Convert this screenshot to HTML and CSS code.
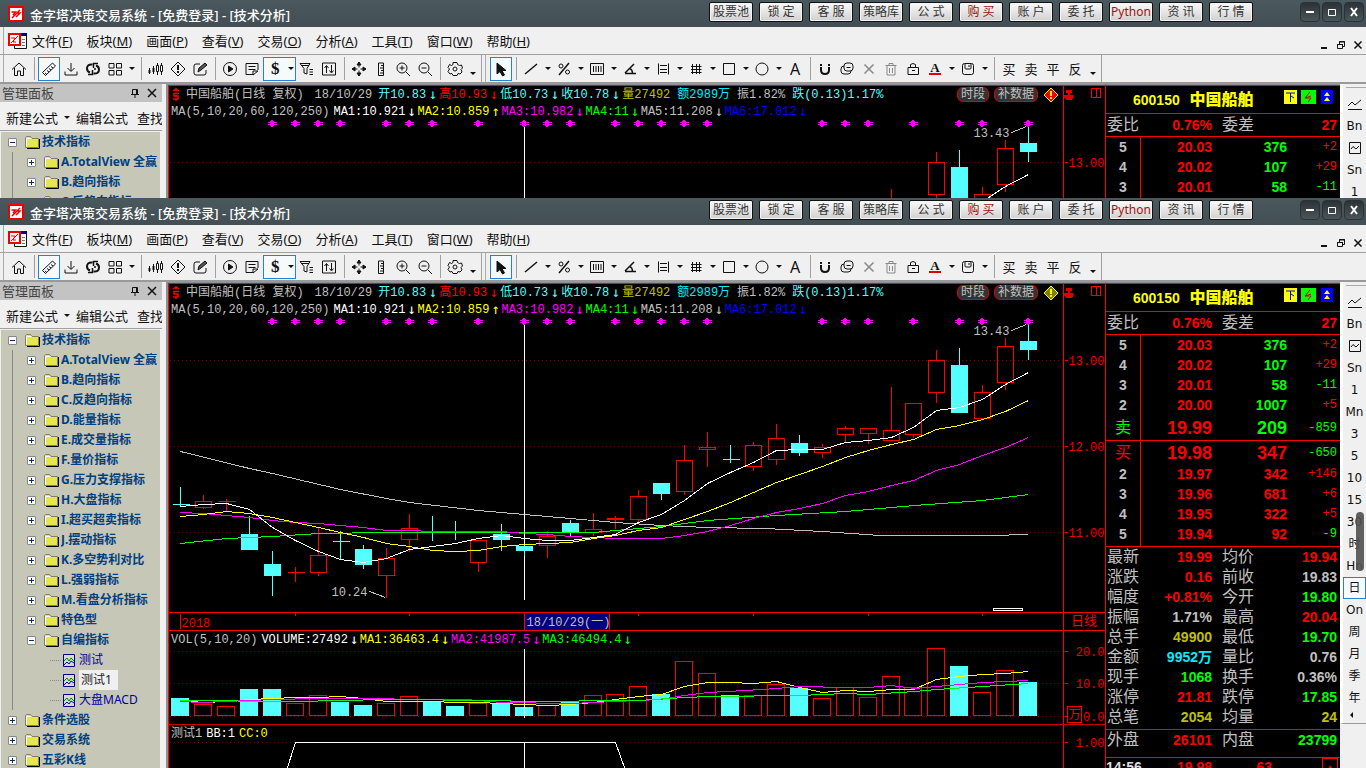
FILE: index.html
```html
<!DOCTYPE html>
<html lang="zh-CN">
<head>
	<meta charset="utf-8">
	<title>金字塔决策交易系统</title>
	<link rel="stylesheet" href="styles.css">
</head>
<body>
	<svg class="symbols" aria-hidden="true">
		<symbol id="i-home" viewBox="0 0 16 16"><path d="M1 8.500 8 2l7 6.500M3.500 7v7.500h3V10h3v4.500h3V7"/></symbol>
		<symbol id="i-ruler" viewBox="0 0 16 16"><path d="M1.500 11.500 11.500 2l3 3L4.500 14.500zM4 12l1.500 1M6 9.500l2 1.500M8 7.500l2 1.500M10 5.500l2 1.500"/></symbol>
		<symbol id="i-down" viewBox="0 0 16 16"><path d="M8 2v8M4.500 7 8 10.500 11.500 7M2 10.500V14h12v-3.500"/></symbol>
		<symbol id="i-sync" viewBox="0 0 16 16"><path d="M7.500 3.500Q2 3 2 7.500q0 3 3 4M8.500 12.500q5.500.500 5.500-4 0-3-3-4" stroke-width="2"/><path d="M3 13.500h4.500V9M13 2.500H8.500V7M9 8h2" stroke-width="1.500"/></symbol>
		<symbol id="i-grid" viewBox="0 0 16 16"><path d="M2 2.500h5v4.500H2zM9.500 2.500h5v4.500h-5zM2 9.500h5V14H2zM9.500 9.500h5V14h-5z"/></symbol>
		<symbol id="i-candle" viewBox="0 0 16 16"><path d="M1.500 7v6M5.500 5v8M9.500 2v12M13.500 2v12"/><path d="M1.500 9v3M5.500 7v4" stroke-width="2"/><path d="M8.500 4.500h2v6h-2zM12.500 4.500h2v6h-2z" fill="#fff"/></symbol>
		<symbol id="i-warn" viewBox="0 0 16 16"><path d="M8 1l7 7-7 7-7-7z"/><path d="M8 4v5M8 10v2" stroke-width="2"/></symbol>
		<symbol id="i-edit" viewBox="0 0 16 16"><path d="M8 3H4Q2 3 2 5v7q0 2 2 2h8q2 0 2-2V9"/><path d="M6 11l1-4 6-5 2 2-6 5z" fill="#555"/></symbol>
		<symbol id="i-play" viewBox="0 0 16 16"><circle cx="8" cy="8" r="6.500"/><path d="M6.500 5v6L11 8z" fill="#111"/></symbol>
		<symbol id="i-note" viewBox="0 0 16 16"><path d="M14 9V2.500H2v11h7M4.500 5.500h7M4.500 8.500h7M9 14v-4h5z"/></symbol>
		<symbol id="i-filter" viewBox="0 0 16 16"><path d="M1 2.500h10L8 7.500V13l-3-1V7.500zM2 4.500h8M10.500 8.500H14M10.500 11H14M10.500 13.500H14"/></symbol>
		<symbol id="i-updown" viewBox="0 0 16 16"><path d="M1.500 2h13v12h-13zM5.500 12V5M3.500 7l2-2.500 2 2.500M10.500 4v7M8.500 9.500l2 2.500 2-2.500"/></symbol>
		<symbol id="i-move" viewBox="0 0 16 16"><path d="M8 1v14M1 8h14"/><path d="M8 1l2 3H6zM8 15l2-3H6zM1 8l3-2v4zM15 8l-3-2v4z" fill="#111"/><path d="M6.500 6.500h3v3h-3z" fill="#f0f0f0" stroke="none"/></symbol>
		<symbol id="i-scale" viewBox="0 0 16 16"><path d="M5.500 2h5v12.500h-5zM8 4.500h2M7 7h3M8 9.500h2M7 12h3"/></symbol>
		<symbol id="i-zin" viewBox="0 0 16 16"><circle cx="7" cy="7" r="5"/><path d="M4.500 7h5M7 4.500v5M11 11l4 4"/></symbol>
		<symbol id="i-zout" viewBox="0 0 16 16"><circle cx="7" cy="7" r="5"/><path d="M4.500 7h5M11 11l4 4"/></symbol>
		<symbol id="i-gear" viewBox="0 0 16 16"><path d="M6 1.500h4l.5 2 2 1 2-.5 1 3-1.500 1.500L15 11l-2 2-2-.5-1 2H6l-1-2-2 .5-2-2.500L2.500 8 1 6.500l1.500-3 2 1 1.500-1z"/><circle cx="8" cy="8" r="2"/></symbol>
		<symbol id="i-cursor" viewBox="0 0 16 16"><path d="M4 2v11l3-2.500L9.500 15l2-1-2.500-4.500h4z" fill="#111"/></symbol>
		<symbol id="i-line" viewBox="0 0 16 16"><path d="M2 13 14 3" stroke-width="1.500"/></symbol>
		<symbol id="i-percent" viewBox="0 0 16 16"><path d="M3 14 13 2" stroke-width="1.500"/><circle cx="5" cy="5" r="2"/><circle cx="11.500" cy="11" r="2"/></symbol>
		<symbol id="i-bars" viewBox="0 0 16 16"><path d="M1.500 2.500h13v11h-13zM4.500 5v6M7 5v6M9.500 5v6M12 5v6"/></symbol>
		<symbol id="i-angle" viewBox="0 0 16 16"><path d="M3 12.500h11M3 12 12 3M7.500 7.500q3 1 3 5" stroke-width="1.500"/></symbol>
		<symbol id="i-levels" viewBox="0 0 16 16"><path d="M3.500 2.500v11M13.500 2.500v11M5 4.500h7M5 8.500h7M5 11.500h7"/></symbol>
		<symbol id="i-hash" viewBox="0 0 16 16"><path d="M4.500 3v10M8.500 3v10M11.500 3v10M3 5.500h10.500M3 8.500h10.500M3 11.500h10.500"/></symbol>
		<symbol id="i-rect" viewBox="0 0 16 16"><path d="M2.500 2.500h11v11h-11z"/></symbol>
		<symbol id="i-circle" viewBox="0 0 16 16"><circle cx="8" cy="8" r="6"/></symbol>
		<symbol id="i-magnet" viewBox="0 0 16 16"><path d="M4 6v3q0 4 4 4t4-4V6M4 3v2M12 3v2" stroke-width="2"/></symbol>
		<symbol id="i-copy" viewBox="0 0 16 16"><rect x="5" y="2" width="9" height="8" rx="3"/><path d="M5 5Q2 5 2 8v2q0 3 3 3h4q3 0 3-3M7.500 6.500h4"/></symbol>
		<symbol id="i-x" viewBox="0 0 16 16"><path d="M3.500 3.500l9 9M12.500 3.500l-9 9" stroke="#888" stroke-width="1.500"/></symbol>
		<symbol id="i-trash" viewBox="0 0 16 16"><path d="M2.500 4.500h11M6 4V2.500h4V4M4 5v9h8V5M6.500 7v5M9.500 7v5" stroke="#888"/></symbol>
		<symbol id="i-lock" viewBox="0 0 16 16"><path d="M3 6.500h10.500v7H3zM5.500 6V3.500q2.500-2 5 0V6M7 9.500h3"/></symbol>
		<symbol id="i-save" viewBox="0 0 16 16"><rect x="2.500" y="2.500" width="11" height="11" rx="2"/><path d="M5 3v4q0 1 1 1h4q1 0 1-1V3M9 4v2"/></symbol>
		<symbol id="i-trend" viewBox="0 0 16 16"><path d="M1 10 5 6l3 3 6-5M1 13.500h14"/></symbol>
		<symbol id="i-chart" viewBox="0 0 16 16"><path d="M2.500 2.500h11v11h-11zM4 9l2-2.500 3 2.500 3-3"/></symbol>
		<symbol id="i-logo" viewBox="0 0 16 16"><path d="M0 0h16v16H0z" fill="#e00" stroke="none"/><path d="M2 2h12v12H2z" fill="#fff" stroke="none"/><path d="M4 12l8-8M3.500 6h4L5 9M8 11l4-4H9" stroke="#e00" stroke-width="1.500"/></symbol>
		<symbol id="i-doc" viewBox="0 0 20 18"><path d="M6.500 1.500h12v15h-12z" fill="#fff"/><path d="M6 1h13v3H6z" fill="#000080" stroke="none"/><path d="M14 7.500h3M14 10.500h3M14 13.500h3" stroke="#777"/><path d="M1 2h11v11H1z" fill="#fff" stroke="#e00" stroke-width="2"/><path d="M3 11l7-7M3 6h4l-2 4h3" stroke="#e00"/></symbol>
		<symbol id="i-folder" viewBox="0 0 15 14"><path d="M2 13.500h12.500V4" stroke="#000"/><path d="M.5 12.500v-10l1-1h4l1.500 2h6.500v9z" fill="#e6e650" stroke="#808060"/><path d="M1.500 3.500h5M1.500 11.500V4" stroke="#fff"/></symbol>
		<symbol id="i-formula" viewBox="0 0 12 13"><path d="M.5.5h11v12H.5z" fill="#d8d8cc" stroke="#000080"/><path d="M1 7l3-3 2 3 2-3 3 3" stroke="#080"/><path d="M1 11l3-3 2 2 2-3 3 2" stroke="#00f"/></symbol>
		<symbol id="i-pin" viewBox="0 0 10 10"><path d="M2.500 6V1.500h5V6M1 6.500h8M5 7v3M6.500 2v4"/></symbol>
		<symbol id="i-anchor" viewBox="0 0 10 12"><path d="M2 0h6v3H6v2h4v3L8 10H2L0 8V5h4V3H2z" fill="#d00" stroke="none"/></symbol>
	</svg>

	<section class="window back">
		<header class="titlebar">
			<svg class="logo"><use href="#i-logo"/></svg>
			<h1>金字塔决策交易系统 - [免费登录] - [技术分析]</h1>
			<nav class="quick">
				<button>股票池</button>
				<button>锁 定</button>
				<button>客 服</button>
				<button>策略库</button>
				<button>公 式</button>
				<button class="hot">购 买</button>
				<button>账 户</button>
				<button>委 托</button>
				<button class="hot">Python</button>
				<button>资 讯</button>
				<button>行 情</button>
			</nav>
			<div class="winbtns">
				<button aria-label="最小化"><svg viewBox="0 0 12 12"><path d="M2 6h8" stroke-width="2"/></svg></button>
				<button aria-label="最大化"><svg viewBox="0 0 12 12"><path d="M2.500 3.500h7v6h-7z"/></svg></button>
				<button aria-label="关闭"><svg viewBox="0 0 12 12"><path d="M3 2l6 8M9 2l-6 8" stroke-width="2"/></svg></button>
			</div>
		</header>

		<div class="menubar">
			<svg class="doc"><use href="#i-doc"/></svg>
			<button>文件(<u>F</u>)</button>
			<button>板块(<u>M</u>)</button>
			<button>画面(<u>P</u>)</button>
			<button>查看(<u>V</u>)</button>
			<button>交易(<u>O</u>)</button>
			<button>分析(<u>A</u>)</button>
			<button>工具(<u>T</u>)</button>
			<button>窗口(<u>W</u>)</button>
			<button>帮助(<u>H</u>)</button>
			<div class="mdi">
				<button aria-label="最小化"><svg viewBox="0 0 10 10"><path d="M2 8h6" stroke-width="2"/></svg></button>
				<button aria-label="还原"><svg viewBox="0 0 10 10"><path d="M1.500 4.500h5v4h-5zM3.500 4V1.500h5v5H7M1 4.500h6M3 2h6"/></svg></button>
				<button aria-label="关闭"><svg viewBox="0 0 10 10"><path d="M1.500 1.500l7 7M8.500 1.500l-7 7" stroke-width="1.500"/></svg></button>
			</div>
		</div>

		<div class="toolbars">
			<div class="toolbar">
				<button aria-label="主页"><svg><use href="#i-home"/></svg></button>
				<i class="sep"></i>
				<button class="on" aria-label="画线"><svg><use href="#i-ruler"/></svg></button>
				<button aria-label="下载"><svg><use href="#i-down"/></svg></button>
				<button aria-label="刷新"><svg><use href="#i-sync"/></svg></button>
				<button class="drop" aria-label="版面"><svg><use href="#i-grid"/></svg></button>
				<i class="sep"></i>
				<button aria-label="K线"><svg><use href="#i-candle"/></svg></button>
				<button aria-label="预警"><svg><use href="#i-warn"/></svg></button>
				<button aria-label="编辑"><svg><use href="#i-edit"/></svg></button>
				<i class="sep"></i>
				<button aria-label="播放"><svg><use href="#i-play"/></svg></button>
				<button aria-label="记事"><svg><use href="#i-note"/></svg></button>
				<button class="drop on money">$</button>
				<button aria-label="筛选"><svg><use href="#i-filter"/></svg></button>
				<button aria-label="排序"><svg><use href="#i-updown"/></svg></button>
				<i class="sep"></i>
				<button aria-label="移动"><svg><use href="#i-move"/></svg></button>
				<button aria-label="标尺"><svg><use href="#i-scale"/></svg></button>
				<button aria-label="放大"><svg><use href="#i-zin"/></svg></button>
				<button aria-label="缩小"><svg><use href="#i-zout"/></svg></button>
				<i class="sep"></i>
				<button aria-label="设置"><svg><use href="#i-gear"/></svg></button>
				<button class="more" aria-label="更多"></button>
			</div>
			<div class="toolbar">
				<button class="on" aria-label="选择"><svg><use href="#i-cursor"/></svg></button>
				<i class="sep"></i>
				<button class="drop" aria-label="直线"><svg><use href="#i-line"/></svg></button>
				<button class="drop" aria-label="百分比"><svg><use href="#i-percent"/></svg></button>
				<button class="drop" aria-label="周期线"><svg><use href="#i-bars"/></svg></button>
				<button class="drop" aria-label="角度线"><svg><use href="#i-angle"/></svg></button>
				<button class="drop" aria-label="水平线"><svg><use href="#i-levels"/></svg></button>
				<button class="drop" aria-label="网格"><svg><use href="#i-hash"/></svg></button>
				<button class="drop" aria-label="矩形"><svg><use href="#i-rect"/></svg></button>
				<button class="drop" aria-label="圆"><svg><use href="#i-circle"/></svg></button>
				<button class="letter">A</button>
				<i class="sep"></i>
				<button aria-label="吸附"><svg><use href="#i-magnet"/></svg></button>
				<button aria-label="复制"><svg><use href="#i-copy"/></svg></button>
				<button aria-label="删除"><svg><use href="#i-x"/></svg></button>
				<button aria-label="清空"><svg><use href="#i-trash"/></svg></button>
				<button aria-label="锁定"><svg><use href="#i-lock"/></svg></button>
				<button class="drop color"><b>A</b></button>
				<button class="drop" aria-label="保存"><svg><use href="#i-save"/></svg></button>
				<i class="sep"></i>
				<button>买</button>
				<button>卖</button>
				<button>平</button>
				<button>反</button>
				<button class="more" aria-label="更多"></button>
			</div>
		</div>

		<div class="workspace">
			<aside class="panel">
				<div class="panel-head">
					<h2>管理面板</h2>
					<button aria-label="固定"><svg viewBox="0 0 10 10"><use href="#i-pin"/></svg></button>
					<button aria-label="关闭"><svg viewBox="0 0 10 10"><path d="M1 1l8 8M9 1l-8 8" stroke-width="1.500"/></svg></button>
				</div>
				<div class="panel-tools">
					<button class="new">新建公式</button>
					<button class="edit">编辑公式</button>
					<button>查找</button>
				</div>
				<ul class="tree">
					<li><button class="box open"></button><svg><use href="#i-folder"/></svg><b>技术指标</b>
						<ul>
							<li><button class="box"></button><svg><use href="#i-folder"/></svg><b>A.TotalView 全赢</b></li>
							<li><button class="box"></button><svg><use href="#i-folder"/></svg><b>B.趋向指标</b></li>
							<li><button class="box"></button><svg><use href="#i-folder"/></svg><b>C.反趋向指标</b></li>
							<li><button class="box"></button><svg><use href="#i-folder"/></svg><b>D.能量指标</b></li>
							<li><button class="box"></button><svg><use href="#i-folder"/></svg><b>E.成交量指标</b></li>
							<li><button class="box"></button><svg><use href="#i-folder"/></svg><b>F.量价指标</b></li>
							<li><button class="box"></button><svg><use href="#i-folder"/></svg><b>G.压力支撑指标</b></li>
							<li><button class="box"></button><svg><use href="#i-folder"/></svg><b>H.大盘指标</b></li>
							<li><button class="box"></button><svg><use href="#i-folder"/></svg><b>I.超买超卖指标</b></li>
							<li><button class="box"></button><svg><use href="#i-folder"/></svg><b>J.摆动指标</b></li>
							<li><button class="box"></button><svg><use href="#i-folder"/></svg><b>K.多空势利对比</b></li>
							<li><button class="box"></button><svg><use href="#i-folder"/></svg><b>L.强弱指标</b></li>
							<li><button class="box"></button><svg><use href="#i-folder"/></svg><b>M.看盘分析指标</b></li>
							<li><button class="box"></button><svg><use href="#i-folder"/></svg><b>特色型</b></li>
							<li><button class="box open"></button><svg><use href="#i-folder"/></svg><b>自编指标</b>
								<ul class="leaves">
									<li><svg><use href="#i-formula"/></svg><a href="#">测试</a></li>
									<li><svg><use href="#i-formula"/></svg><a class="sel" href="#">测试1</a></li>
									<li><svg><use href="#i-formula"/></svg><a href="#">大盘MACD</a></li>
								</ul>
							</li>
						</ul>
					</li>
					<li><button class="box"></button><svg><use href="#i-folder"/></svg><b>条件选股</b></li>
					<li><button class="box"></button><svg><use href="#i-folder"/></svg><b>交易系统</b></li>
					<li><button class="box"></button><svg><use href="#i-folder"/></svg><b>五彩K线</b></li>
				</ul>
			</aside>

			<main class="chart">
				<div class="pane">
					<div class="plot">
						<div class="line info">
							<svg class="money-ico" viewBox="0 0 8 14"><path d="M4 0v3M1 3l3-2 3 2M7 5.500H2V8h4v3H1M4 11v2"/></svg>
							<span class="name">中国船舶(日线 复权)</span>
							<span class="day">18/10/29</span>
							<span class="cyan">开10.83<i>↓</i></span>
							<span class="red">高10.93<i>↓</i></span>
							<span class="cyan">低10.73<i>↓</i></span>
							<span class="cyan">收10.78<i>↓</i></span>
							<span class="olive item">量27492</span>
							<span class="sky item">额2989万</span>
							<span class="item">振1.82%</span>
							<span class="cyan">跌(0.13)1.17%</span>
							<div class="badges">
								<button>时段</button>
								<button>补数据</button>
								<svg class="alert" viewBox="0 0 16 16"><path d="M8 1l7 7-7 7-7-7z"/><path class="mark" d="M8 4v5M8 10v2"/></svg>
							</div>
						</div>
						<div class="line">
							<span class="item">MA(5,10,20,60,120,250)</span>
							<span class="white">MA1:10.921<i>↓</i></span>
							<span class="yellow">MA2:10.859<i>↑</i></span>
							<span class="pink">MA3:10.982<i>↓</i></span>
							<span class="green">MA4:11<i>↓</i></span>
							<span>MA5:11.208<i>↓</i></span>
							<span class="blue">MA6:17.012<i>↓</i></span>
						</div>
						<svg class="canvas price"></svg>
					</div>
					<svg class="axis price-axis"></svg>
				</div>
				<div class="pane time">
					<svg class="canvas dates"></svg>
					<div class="period">日线</div>
				</div>
				<div class="pane dim">
					<div class="plot">
						<div class="line">
							<span class="item">VOL(5,10,20)</span>
							<span class="white">VOLUME:27492<i>↓</i></span>
							<span class="yellow">MA1:36463.4<i>↓</i></span>
							<span class="pink">MA2:41987.5<i>↓</i></span>
							<span class="green">MA3:46494.4<i>↓</i></span>
						</div>
						<svg class="canvas volume"></svg>
					</div>
					<svg class="axis volume-axis"></svg>
				</div>
				<div class="pane last">
					<div class="plot">
						<div class="line">
							<span class="item">测试1</span>
							<span class="white item">BB:1</span>
							<span class="yellow">CC:0</span>
						</div>
						<svg class="canvas test"></svg>
					</div>
					<svg class="axis test-axis"></svg>
				</div>
			</main>

			<section class="quote">
				<div class="stock">
					<h2>600150 <strong>中国船舶</strong></h2>
					<svg viewBox="0 0 50 14">
						<path d="M0 0h13v14H0z" fill="#ff0"/><path d="M2 3h9M6.500 3v9M7 6l3 2" stroke="#00f"/>
						<path d="M17 0h15v14H17z" fill="#0f0"/><path d="M26 2l-5 6h6l-3 4M21 8l6-2" stroke="#c00"/>
						<path d="M37 0h12v14H37z" fill="#00f"/><path d="M40 6l3-4 3 4zM40 11l3-4 3 4z" fill="#ff0"/>
					</svg>
				</div>
				<table class="detail ratio">
					<tr><th>委比</th><td class="red">0.76%</td><th>委差</th><td class="red">27</td></tr>
				</table>
				<table class="depth">
					<tr><th>5</th><td class="red">20.03</td><td class="green">376</td><td class="red">+2</td></tr>
					<tr><th>4</th><td class="red">20.02</td><td class="green">107</td><td class="red">+29</td></tr>
					<tr><th>3</th><td class="red">20.01</td><td class="green">58</td><td class="green">-11</td></tr>
					<tr><th>2</th><td class="red">20.00</td><td class="green">1007</td><td class="red">+5</td></tr>
					<tr class="best"><th class="green">卖</th><td class="red">19.99</td><td class="green">209</td><td class="green">-859</td></tr>
				</table>
				<table class="depth bids">
					<tr class="best"><th class="red">买</th><td class="red">19.98</td><td class="red">347</td><td class="green">-650</td></tr>
					<tr><th>2</th><td class="red">19.97</td><td class="red">342</td><td class="red">+146</td></tr>
					<tr><th>3</th><td class="red">19.96</td><td class="red">681</td><td class="red">+6</td></tr>
					<tr><th>4</th><td class="red">19.95</td><td class="red">322</td><td class="red">+5</td></tr>
					<tr><th>5</th><td class="red">19.94</td><td class="red">92</td><td class="green">-9</td></tr>
				</table>
				<table class="detail facts">
					<tr><th>最新</th><td class="red">19.99</td><th>均价</th><td class="red">19.94</td></tr>
					<tr><th>涨跌</th><td class="red">0.16</td><th>前收</th><td>19.83</td></tr>
					<tr><th>幅度</th><td class="red">+0.81%</td><th>今开</th><td class="green">19.80</td></tr>
					<tr><th>振幅</th><td>1.71%</td><th>最高</th><td class="red">20.04</td></tr>
					<tr><th>总手</th><td class="olive">49900</td><th>最低</th><td class="green">19.70</td></tr>
					<tr><th>金额</th><td class="sky">9952万</td><th>量比</th><td>0.76</td></tr>
					<tr><th>现手</th><td class="green">1068</td><th>换手</th><td>0.36%</td></tr>
					<tr><th>涨停</th><td class="red">21.81</td><th>跌停</th><td class="green">17.85</td></tr>
					<tr><th>总笔</th><td class="olive">2054</td><th>均量</th><td class="olive">24</td></tr>
				</table>
				<table class="detail sides">
					<tr><th>外盘</th><td class="red">26101</td><th>内盘</th><td class="green">23799</td></tr>
				</table>
				<div class="tick">
					<span class="t">14:56</span><span class="p red">19.98</span><span class="v red">63</span>
					<button aria-label="向上">▲</button>
				</div>
			</section>

			<nav class="periods">
				<button aria-label="分时"><svg><use href="#i-trend"/></svg></button>
				<button>Bn</button>
				<button aria-label="走势"><svg><use href="#i-chart"/></svg></button>
				<button>Sn</button>
				<button>1</button>
				<button>Mn</button>
				<button>3</button>
				<button>5</button>
				<button>10</button>
				<button>15</button>
				<button>30</button>
				<button>时</button>
				<button>Hn</button>
				<button class="on">日</button>
				<button>On</button>
				<button>周</button>
				<button>月</button>
				<button>季</button>
				<button>年</button>
				<button class="fold" aria-label="收起"></button>
			</nav>
		</div>
	</section>
	<div class="thumb"></div>
	<script src="chart.js"></script>
</body>
</html>
```
FILE: styles.css
```css
*{
	box-sizing: border-box;
}
body{
	margin: 0;
	height: 100vh;
	overflow: hidden;
	display: flex;
	flex-direction: column;
	position: relative;
	background: #f0f0f0;
	font: 13px/18px "Noto Sans", "Noto Sans CJK SC", sans-serif;
	color: #111;
}
button{
	margin: 0;
	padding: 0;
	border: 0;
	background: none;
	font: inherit;
	color: inherit;
	white-space: nowrap;
}
h1, h2, ul{
	margin: 0;
	padding: 0;
}
h1, h2{
	font-size: 13px;
	font-weight: normal;
}
svg{
	display: block;
	fill: none;
	stroke: #111;
	flex: none;
}
.symbols{
	position: absolute;
	width: 0;
	height: 0;
}

.red{ color: #f00; }
.green{ color: #0f0; }
.cyan{ color: #54ffff; }
.sky{ color: #0ef; }
.olive{ color: #c0c000; }
.yellow{ color: #ff0; }
.pink{ color: #f0f; }
.blue{ color: #00f; }
.white{ color: #fff; }

/* window */
.window{
	flex: 1 0 0;
	min-height: 0;
	overflow: hidden;
	display: flex;
	flex-direction: column;
}
.window.back{
	flex: 0 0 198px;
}
.titlebar{
	flex: none;
	height: 27px;
	padding: 0 2px 0 8px;
	display: flex;
	align-items: center;
	background: linear-gradient(#4a595e, #424e53);
	color: #fff;
}
.logo{
	width: 16px;
	height: 16px;
	margin-right: 6px;
}
.titlebar h1{
	flex: 1;
	font-weight: 500;
	padding-top: 2px;
	white-space: nowrap;
}
.quick{
	display: flex;
	gap: 6px;
	margin: 0 47px 4px 0;
}
.quick button{
	width: 44px;
	height: 20px;
	border: 1px solid #111;
	border-radius: 2px;
	background: linear-gradient(#fafafa, #d0d0d0);
	box-shadow: inset 0 0 0 1px #f4f4f4;
	color: #333;
	font-size: 12px;
	line-height: 18px;
}
.quick .hot{
	color: #a01010;
}
.winbtns{
	display: flex;
	gap: 2px;
	margin-bottom: 4px;
}
.winbtns button{
	width: 20px;
	height: 20px;
	border: 1px solid #2a3235;
	border-radius: 4px;
	background: linear-gradient(#2c3336, #4a5559);
}
.winbtns svg{
	width: 12px;
	height: 12px;
	margin: auto;
	stroke: #fff;
}

.menubar{
	flex: none;
	height: 28px;
	padding: 0 3px 0 8px;
	display: flex;
	align-items: center;
	gap: 14px;
	border-bottom: 1px solid #a0a0a0;
	box-shadow: inset 3px 0 0 #f0f0f0, inset 4px 0 0 #aaa;
}
.doc{
	width: 20px;
	height: 18px;
	margin-right: -10px;
}
.mdi{
	margin-left: auto;
	padding-top: 9px;
	display: flex;
	gap: 7px;
}
.mdi svg{
	width: 10px;
	height: 10px;
}

.toolbars{
	flex: none;
	display: flex;
	height: 29px;
	border-bottom: 2px solid #999;
}
.toolbar{
	display: flex;
	align-items: center;
	padding: 0 1px 0 8px;
	border-right: 1px solid #a0a0a0;
	box-shadow: inset 3px 0 0 #f0f0f0, inset 4px 0 0 #aaa;
}
.toolbar button{
	width: 22px;
	height: 24px;
	display: flex;
	align-items: center;
	justify-content: center;
}
.toolbar svg, .periods svg{
	width: 16px;
	height: 16px;
}
.toolbar .on, .periods .on{
	border: 1px solid #2a80d0;
	background: #f7fafd;
}
.toolbar .drop{
	width: 33px;
	justify-content: flex-start;
	padding-left: 3px;
}
.toolbar .drop::after, .new::after{
	content: "";
	border: 3px solid transparent;
	border-top-color: #111;
	border-bottom: 0;
	margin-left: 6px;
}
.toolbar .money{
	font: bold 17px/20px "Liberation Serif", serif;
	padding-left: 7px;
}
.toolbar .money::after{
	margin-left: 8px;
}
.toolbar .letter{
	font-size: 16px;
}
.toolbar .color b{
	width: 12px;
	margin: 0 2px;
	font: bold 13px/11px "Liberation Serif", serif;
	border-bottom: 2px solid #d00;
	text-align: center;
}
.toolbar .more{
	width: 14px;
	padding-top: 10px;
}
.more::after{
	content: "";
	border: 3px solid transparent;
	border-top-color: #111;
	border-bottom: 0;
}
.sep{
	width: 8px;
	height: 23px;
	background: linear-gradient(#a0a0a0, #a0a0a0) 4px 0 / 1px 100% no-repeat;
}

.workspace{
	flex: 1;
	min-height: 0;
	display: flex;
}

/* left panel */
.panel{
	flex: none;
	width: 162px;
	display: flex;
	flex-direction: column;
	overflow: hidden;
}
.panel-head{
	flex: none;
	height: 18px;
	padding: 0 5px 0 2px;
	display: flex;
	align-items: center;
	gap: 7px;
	background: #c3c3c3;
	color: #444;
}
.panel-head h2{
	flex: 1;
}
.panel-head svg{
	width: 10px;
	height: 10px;
}
.panel-tools{
	flex: none;
	height: 29px;
	padding: 3px 0 0 6px;
	display: flex;
	align-items: center;
	gap: 6px;
	overflow: hidden;
	border-bottom: 1px solid #a0a0a0;
}
.new{
	display: flex;
	align-items: center;
}
.edit{
	margin-right: 3px;
}
.tree{
	flex: 1;
	margin: 1px 2px 0 1px;
	padding: 0 0 0 7px;
	overflow: hidden;
	background: #c7c7b7;
	box-shadow: 2px 0 0 #f0f0f0, 3px 0 0 #a0a0a0;
	font-size: 12px;
	color: #004080;
}
.tree ul{
	flex-basis: 100%;
	padding-left: 19px;
	background: radial-gradient(#888 50%, transparent 50%) 4px 0 / 1px 3px repeat-y;
}
.tree li{
	display: flex;
	flex-wrap: wrap;
	align-items: center;
	line-height: 20px;
	list-style: none;
	white-space: nowrap;
}
.tree svg{
	width: 15px;
	height: 14px;
	margin-right: 2px;
}
.tree b{
	flex: 1 0 0;
	min-width: 0;
	overflow: hidden;
}
.box{
	width: 9px;
	height: 9px;
	margin-right: 8px;
	border: 1px solid #888;
	border-radius: 1px;
	background: linear-gradient(#036, #036) center / 5px 1px no-repeat, linear-gradient(#036, #036) center / 1px 5px no-repeat, #fff;
}
.box.open{
	background: linear-gradient(#036, #036) center / 5px 1px no-repeat, #fff;
}
.tree .leaves{
	padding-left: 18px;
	background: none;
}
.leaves li::before{
	content: "";
	width: 11px;
	margin: 0 2px 0 5px;
	border-top: 1px dotted #888;
}
.leaves svg{
	width: 12px;
	height: 13px;
	margin-right: 4px;
}
.leaves a{
	color: #0000a0;
	text-decoration: none;
}
.leaves .sel{
	padding: 0 6px 0 2px;
	background: #f0f0f0;
	color: #222;
}

/* chart */
.chart{
	flex: 1;
	min-width: 0;
	margin-left: 4px;
	display: flex;
	flex-direction: column;
	overflow: hidden;
	background: #000;
	border-left: 2px solid #909090;
	border-top: 1px solid #909090;
	box-shadow: inset 1px 1px 0 #f00;
	padding: 1px 0 0 1px;
	font: 12px/17px "Liberation Mono", "Noto Sans CJK SC", monospace;
	color: #c0c0c0;
}
.pane{
	flex: none;
	display: grid;
	grid-template-columns: minmax(0, 1fr) 42px;
	border-bottom: 1px solid #f00;
}
.pane.dim{
	border-bottom-color: #c00;
}
.pane.last{
	flex: 1;
	border-bottom: 0;
}
.line{
	display: flex;
	height: 17px;
	padding-left: 2px;
	line-height: 19px;
	white-space: nowrap;
}
.line i{
	display: inline-block;
	width: 12px;
	font: 14px/17px "DejaVu Sans Mono", monospace;
	text-align: center;
	vertical-align: top;
}
.info i{
	width: 13px;
}
.item{
	margin-right: 4px;
}
.info .item{
	margin-right: 7px;
}
.name{
	margin-right: 11px;
}
.day{
	margin-right: 6px;
}
.money-ico{
	width: 8px;
	height: 14px;
	margin: 2px 6px 0 1px;
	stroke: #f00;
	stroke-width: 1.5;
}
.badges{
	margin-left: auto;
	padding: 1px 4px 0 0;
	display: flex;
	gap: 5px;
}
.badges button{
	height: 15px;
	padding: 0 3px;
	border: 1px solid #d00;
	border-radius: 6px;
	background: #333;
	font-size: 12px;
	line-height: 12px;
}
.alert{
	width: 16px;
	height: 16px;
	fill: #808000;
	stroke: #ff0;
}
.alert .mark{
	stroke-width: 2;
}
.back .alert{
	fill: #e00;
}
.canvas{
	width: 100%;
	shape-rendering: crispEdges;
}
.axis{
	width: 42px;
	border-left: 1px solid #f00;
	shape-rendering: crispEdges;
}
.price{ height: 294px; }
.price-axis{ height: 328px; }
.volume{ height: 76px; }
.volume-axis{ height: 93px; }
.test{ height: 60px; }
.test-axis{ height: 100%; }
.dates{ height: 17px; }
.canvas text, .axis text{
	stroke: none;
	fill: #c0c0c0;
}
.axis text, .dates .year{
	fill: #e00;
}
.period{
	height: 17px;
	border-left: 1px solid #f00;
	padding-left: 7px;
	color: #f00;
	font-size: 13px;
	white-space: nowrap;
}
.grid{
	stroke: #700;
	stroke-dasharray: 1 3;
}
.up{
	stroke: #f00;
}
.down{
	stroke: #54ffff;
	fill: #54ffff;
}

/* quote */
.quote{
	flex: none;
	width: 235px;
	overflow: hidden;
	background: #000;
	border-left: 1px solid #f00;
	border-top: 1px solid #909090;
	box-shadow: inset 0 1px 0 #f00;
	color: #c0c0c0;
	font: bold 14px/20px "Liberation Sans", "Noto Sans CJK SC", sans-serif;
}
.stock{
	height: 29px;
	padding: 1px 6px 0 27px;
	display: flex;
	align-items: center;
	justify-content: space-between;
	border-bottom: 1px solid #f00;
	color: #ff0;
}
.stock h2{
	font-size: 14px;
	font-weight: bold;
}
.stock strong{
	font-size: 16px;
	margin-left: 6px;
}
.stock svg{
	width: 50px;
	height: 14px;
	margin-bottom: 6px;
	stroke: none;
}
.quote table{
	width: 100%;
	table-layout: fixed;
	border-collapse: separate;
	border-spacing: 0;
	border-bottom: 1px solid #f00;
}
.quote td, .quote th{
	padding: 0;
	height: 20px;
	line-height: 20px;
	text-align: right;
}
.detail th{
	width: 40px;
	font-size: 16px;
	font-weight: normal;
	text-align: left;
	padding-left: 1px;
}
.detail th + td{
	width: 66px;
}
.detail th:nth-child(3){
	width: 45px;
	padding-left: 10px;
}
.detail td:last-child, .depth td:last-child{
	width: auto;
	padding-right: 3px;
}
.quote .ratio th, .quote .ratio td{
	height: 22px;
}
.quote .depth th{
	width: 35px;
	border-right: 1px solid #f00;
	text-align: center;
}
.depth td:nth-child(2){
	width: 71px;
}
.depth td:nth-child(3){
	width: 75px;
}
.quote .depth td:last-child{
	font: 12px/20px "Liberation Mono", monospace;
}
.quote .best th, .quote .best td{
	height: 25px;
}
.quote .bids .best th, .quote .bids .best td{
	height: 23px;
}
.quote .best th{
	font-size: 16px;
	font-weight: normal;
}
.best td{
	font-size: 18px;
}
.bids tr:last-child > *{
	padding-bottom: 2px;
}
.facts{
	padding-bottom: 2px;
}
.sides{
	padding-bottom: 7px;
}
.tick{
	display: flex;
	line-height: 18px;
	color: #ddd;
	padding-right: 2px;
}
.tick .t{ width: 36px; }
.tick .p{ width: 70px; text-align: right; }
.tick .v{ width: 60px; text-align: right; }
.tick button{
	margin-left: auto;
	width: 16px;
	border: 1px solid #f00;
	color: #f00;
	font-size: 12px;
}

/* period bar */
.periods{
	flex: none;
	width: 26px;
	height: 442px;
	padding-top: 9px;
	border-left: 3px solid #fff;
	border-bottom: 1px solid #999;
	background: linear-gradient(#aaa, #aaa) 3px 3px / 20px 1px no-repeat;
	font: 12px/22px "DejaVu Sans", "Noto Sans CJK SC", sans-serif;
}
.periods button{
	width: 100%;
	height: 22px;
	display: flex;
	align-items: center;
	justify-content: center;
}
.periods .fold{
	height: 12px;
}
.fold::after{
	content: "";
	border: 3px solid transparent;
	border-right-color: #111;
	border-left: 0;
	margin-right: 6px;
}
.thumb{
	position: absolute;
	right: 2px;
	top: 512px;
	width: 8px;
	height: 59px;
	border-radius: 4px;
	background: rgba(80, 80, 80, .9);
}
```
FILE: chart.js
```js
// [type, high, top, bottom, low], r = up day, c = down day
var candles = [
	['c',486,504,504,506], ['r',494,501,507,508], ['r',498,501,501,510], ['c',515,534,549,549],
	['c',550,564,575,595], ['r',566,572,572,581], ['r',527,555,572,575], ['c',530,541,541,558],
	['c',544,549,564,568], ['r',547,558,575,597], ['r',513,528,539,551], ['c',515,532,532,540],
	['c',520,532,532,539], ['r',539,540,562,571], ['c',523,534,539,550], ['c',542,546,550,556],
	['r',530,536,545,557], ['c',519,523,532,536], ['r',512,529,532,535], ['r',515,518,519,528],
	['r',489,496,519,521], ['c',482,483,493,499], ['r',444,460,491,494], ['r',431,447,449,466],
	['c',444,459,459,462], ['r',441,445,466,470], ['r',423,438,459,464], ['c',434,443,452,455],
	['r',443,447,452,457], ['r',425,428,434,442], ['r',428,428,433,443], ['r',386,430,440,440],
	['r',402,403,434,437], ['r',349,360,392,402], ['c',347,365,412,412], ['r',384,392,418,418],
	['r',337,346,382,389], ['c',323,341,349,359]
];
var volumes = [698,704,706,689,689,703,695,702,705,703,696,701,706,703,704,707,705,702,695,694,
	686,694,661,673,695,695,684,688,698,687,697,676,687,648,666,692,670,682];
var signals = [4,5,6,7,9,10,11,13,15,16,17,19,20,21,22,23,28,29,30,32,34,35,37];

function dayX(i){
	return 180 + Math.round(i * 22.92);
}
// one value per day, starting from the first
function series(color, values){
	return poly(color, values.map(function(y, i){ return dayX(i) + ',' + y; }).join(' '));
}
function poly(color, points){
	return '<polyline stroke="' + color + '" points="' + points + '"/>';
}
function line(x1, y1, x2, y2, attrs){
	return '<line x1="' + x1 + '" y1="' + y1 + '" x2="' + x2 + '" y2="' + y2 + '" ' + (attrs || '') + '/>';
}
function text(x, y, s, attrs){
	return '<text x="' + x + '" y="' + y + '" ' + (attrs || '') + '>' + s + '</text>';
}
function rect(x, y, w, h, attrs){
	return '<rect x="' + x + '" y="' + y + '" width="' + w + '" height="' + h + '" ' + (attrs || '') + '/>';
}
function put(name, x, y, body){
	document.querySelector('.' + name).innerHTML = '<g transform="translate(' + (0.5 - x) + ',' + (0.5 - y) + ')">' + body + '</g>';
}

function drawPrice(){
	var s = '';
	[360, 446, 532].forEach(function(y){ s += line(169, y, 2400, y, 'class="grid"'); });
	candles.forEach(function(c, i){
		var x = dayX(i);
		s += '<g class="' + (c[0] == 'r' ? 'up' : 'down') + '">';
		s += line(x, c[1], x, c[2]) + line(x, c[3], x, c[4]);
		if(c[2] == c[3]) s += line(x - 8, c[2], x + 9, c[2]) + line(x, c[1], x, c[4]);
		else s += rect(x - 8, c[2], 16, c[3] - c[2]);
		s += '</g>';
	});
	s += poly('#c0c0c0', '180,451 249,468 272,473 340,489 386,498 409,502 478,510 524,514 570,518 615,522 661,525 707,527 765,528 822,531 880,535 990,535 1028,534');
	s += poly('#00ff00', '180,543 226,538 272,536 318,533 386,532 570,532 593,532 615,530 638,528 661,526 684,523 707,520 776,515 845,511 914,505 982,500 1028,494');
	s += series('#ff00ff', [512,513,515,517,520,522,523,525,527,530,530,531,531,531,531,533,534,536,537,538,538,538,535,531,525,518,512,508,503,495,491,485,480,470,464,455,447,437]);
	s += series('#ffff00', [516,514,511,513,517,522,527,532,537,543,546,550,551,550,546,544,543,542,538,535,530,527,519,511,502,492,482,474,466,457,450,444,439,429,425,419,411,400]);
	s += series('#ffffff', [506,504,503,509,527,540,551,559,562,558,549,546,543,538,535,538,540,540,537,534,522,514,500,483,472,462,450,449,449,442,440,437,427,410,407,399,384,372]);
	s += line(524, 323, 524, 545, 'stroke="#fff"') + line(524, 555, 524, 599, 'stroke="#fff"');
	signals.forEach(function(i){
		var x = dayX(i) - 1;
		s += '<path stroke="#f0f" d="M' + (x - 4) + ' 320h9M' + (x - 4) + ' 322h9M' + x + ' 317.500v7M' + (x + 1) + ' 317.500v7M' + (x - 1) + ' 318.500v5M' + (x + 2) + ' 318.500v5"/>';
	});
	s += text(973, 334, '13.43') + line(1011, 330, 1026, 324, 'stroke="#c0c0c0"');
	s += text(331, 595, '10.24') + line(369, 591, 385, 597, 'stroke="#c0c0c0"');
	s += rect(993, 608, 29, 2, 'stroke="#fff" fill="#003"');
	put('price', 169, 318, s);

	s = '';
	[[360, '13.00'], [446, '12.00'], [532, '11.00']].forEach(function(a){
		s += line(0, a[0], 3, a[0], 'class="up"') + text(4, a[0] + 4, a[1]);
	});
	s += '<svg x="-1" y="287" width="10" height="12"><use href="#i-anchor"/></svg>';
	s += rect(27, 286, 9, 9, 'class="up"') + line(32, 286, 32, 295, 'class="up"');
	put('price-axis', 0, 284, s);
}

function drawDates(){
	var s = line(180, 613, 180, 628, 'class="up"') + text(181, 626, '2018', 'class="year"');
	[295, 409, 638, 753, 868, 982].forEach(function(x){ s += line(x, 612, x, 615, 'class="up"'); });
	s += rect(524, 612, 85, 17, 'fill="#000080" stroke="none"');
	s += line(524, 612, 524, 629, 'class="up"') + line(609, 612, 609, 629, 'class="up"');
	s += text(526, 625, '18/10/29(一)');
	put('dates', 169, 613, s);
}

function drawVolume(){
	var s = '';
	[651, 683, 716].forEach(function(y){ s += line(169, y, 2400, y, 'class="grid"'); });
	volumes.forEach(function(y, i){
		s += rect(dayX(i) - 9, y, 17, 715 - y, 'class="' + (candles[i][0] == 'r' ? 'up' : 'down') + '"');
	});
	s += series('#ffff00', [700,702,701,699,698,697,697,696,698,701,701,701,702,702,703,704,705,704,702,699,696,694,686,682,682,683,681,687,692,690,691,689,689,679,676,674,673,671]);
	s += poly('#ff00ff', '180,701 200,702 249,700 272,699 318,698 466,699 501,702 570,703 615,701 660,699 684,695 707,692 745,690 776,688 799,686 845,687 868,687 891,685 914,688 936,686 959,684 982,682 1028,680');
	s += poly('#00ff00', '180,700 295,701 386,699 500,700 520,701 638,700 684,697 710,696 799,695 845,693 868,694 914,691 936,689 982,686 1028,683');
	s += line(524, 648, 524, 717, 'stroke="#fff"');
	put('volume', 169, 648, s);

	s = '';
	[[651, '20.0'], [683, '10.0'], [716, '0.0']].forEach(function(a){
		s += line(0, a[0], 3, a[0], 'class="up"') + text(40, a[0] + 4, a[1], 'text-anchor="end"');
	});
	s += rect(3, 706, 14, 16, 'class="up"') + text(4, 718, '万');
	put('volume-axis', 0, 631, s);
}

function drawTest(){
	var s = line(169, 742, 2400, 742, 'class="grid"');
	s += poly('#ffffff', '286,770 295,742 615,742 625,770');
	s += line(524, 741, 524, 800, 'stroke="#fff"');
	put('test', 169, 742, s);
	put('test-axis', 0, 725, line(0, 742, 3, 742, 'class="up"') + text(40, 746, '1.00', 'text-anchor="end"'));
}

drawPrice();
drawDates();
drawVolume();
drawTest();

// second terminal, in front
var back = document.querySelector('.window');
var front = back.cloneNode(true);
front.classList.remove('back');
back.after(front);
```
